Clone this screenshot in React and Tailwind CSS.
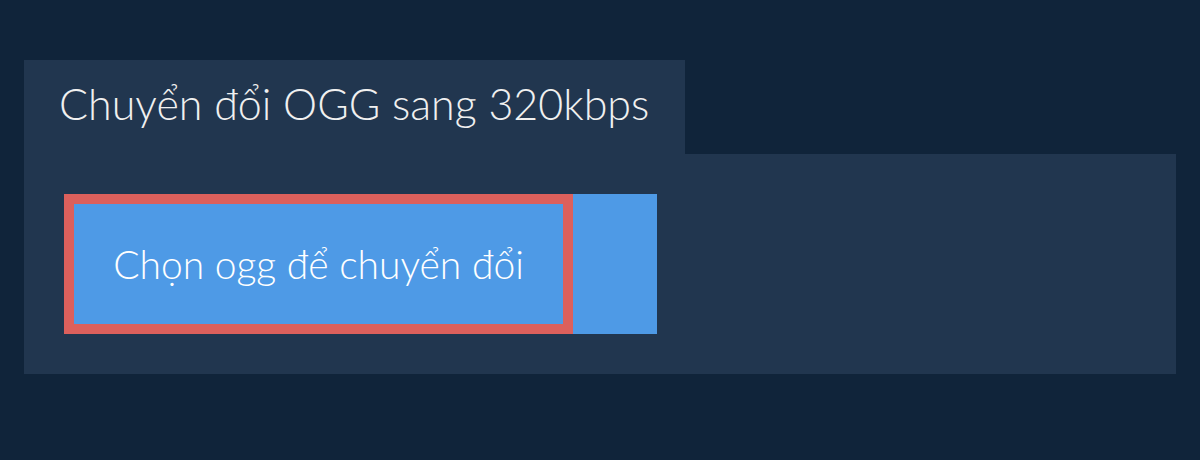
import React from 'react';

const App = () => {
  return (
    <div className="w-[1200px] h-[460px] bg-[#10243a] pt-[60px] px-6" style={{ fontFamily: 'Lato, "Noto Sans", sans-serif' }}>
      <div className="inline-flex items-center h-[94px] w-[661px] bg-[#21364f] pl-[35px]">
        <h1 className="text-[43px] font-light text-[#f0f0f0] leading-none -mt-2">Chuyển đổi OGG sang 320kbps</h1>
      </div>
      <div className="h-[220px] bg-[#21364f] p-10">
        <div className="flex w-[593px] h-[140px] bg-[#4e9ae6]">
          <label className="w-[509px] h-full flex items-center justify-center border-[10px] border-[#dc605c] text-white text-[39px] font-light cursor-pointer">
            Chọn ogg để chuyển đổi
          </label>
        </div>
      </div>
    </div>
  );
};

export default App;
